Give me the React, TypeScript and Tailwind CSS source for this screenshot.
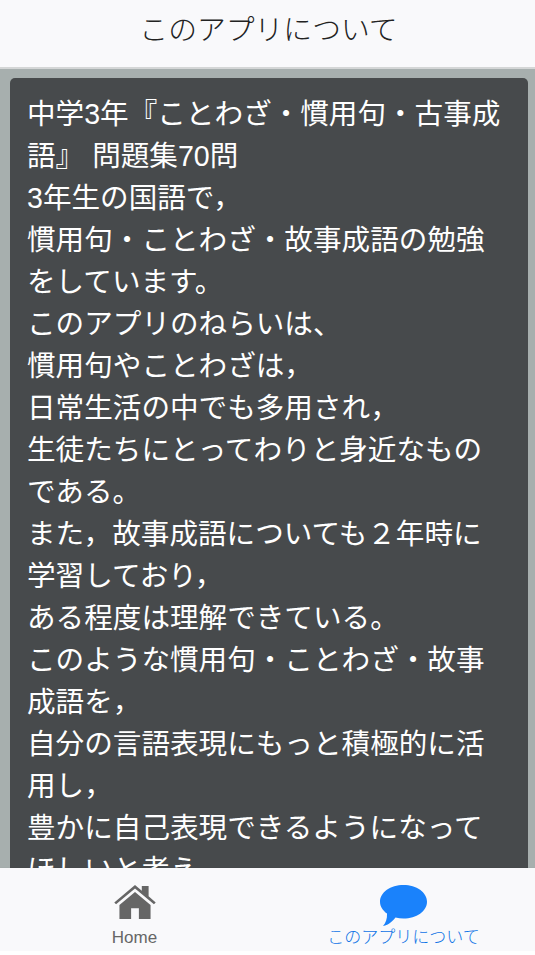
import React from "react";

const lines = [
  "中学3年『ことわざ・慣用句・古事成語』 問題集70問",
  "3年生の国語で，",
  "慣用句・ことわざ・故事成語の勉強をしています。",
  "このアプリのねらいは、",
  "慣用句やことわざは，",
  "日常生活の中でも多用され，",
  "生徒たちにとってわりと身近なものである。",
  "また，故事成語についても２年時に学習しており，",
  "ある程度は理解できている。",
  "このような慣用句・ことわざ・故事成語を，",
  "自分の言語表現にもっと積極的に活用し，",
  "豊かに自己表現できるようになってほしいと考え。",
];

export default function App() {
  return (
    <div className="h-[955px] w-[535px] overflow-hidden flex flex-col bg-white font-['Liberation_Sans','Noto_Sans_CJK_JP',sans-serif]">
      <header className="h-[69px] shrink-0 flex items-center justify-center pl-[2px] bg-[#f9f9fb] border-b-2 border-[#d4d6d6] text-[28.8px] font-light text-[#222222]">
        <span className="-mt-[6px]">このアプリについて</span>
      </header>
      <main className="flex-1 min-h-0 overflow-hidden bg-[#a7afae] pl-[10px] pr-[7px] pt-[9px]">
        <div className="rounded-[5px] bg-[#474a4c] pl-[17px] pr-[24px] pt-[15px] pb-4 text-[28.6px] leading-[42px] text-white">
          {lines.map((l) => (
            <div key={l}>{l}</div>
          ))}
        </div>
      </main>
      <nav className="h-[83px] shrink-0 grid grid-cols-[269px_269px] bg-[#f9f9fb] shadow-[0_1px_2px_rgba(0,0,0,0.25)]">
        <div className="flex flex-col items-center pt-[17px] text-[#666666]">
          <svg width="44" height="35" viewBox="0 0 44 36" className="block">
            <path fill="currentColor" d="M29 1h7v10.500l7.300 6.400-1.800 2L22 3.600 2.500 19.900 .7 17.900 22 0l7 5.800z" />
            <path fill="currentColor" d="M22 7.200 6 20.500V35h12V24h8v11h12V20.500z" />
          </svg>
          <span className="text-[17px] leading-5 mt-[8px]">Home</span>
        </div>
        <div className="flex flex-col items-center pt-[17px] text-[#1a82fb]">
          <svg width="47" height="41" viewBox="0 0 47 41" className="block">
            <path fill="currentColor" d="M23.500 0C36.500 0 47 7.400 47 16.700S36.500 33.500 23.500 33.500c-2.800 0-5.500-.3-8-1C13 35.500 9 40 3 41 5.800 38 7.300 33.500 7 28.500 2.800 25.500 0 21.400 0 16.700 0 7.400 10.500 0 23.500 0z" />
          </svg>
          <span className="text-[17px] leading-5 mt-[2px] font-light text-[#0f74e6]">このアプリについて</span>
        </div>
      </nav>
      <div className="h-[4px] shrink-0 bg-[#ffffff]" />
    </div>
  );
}
